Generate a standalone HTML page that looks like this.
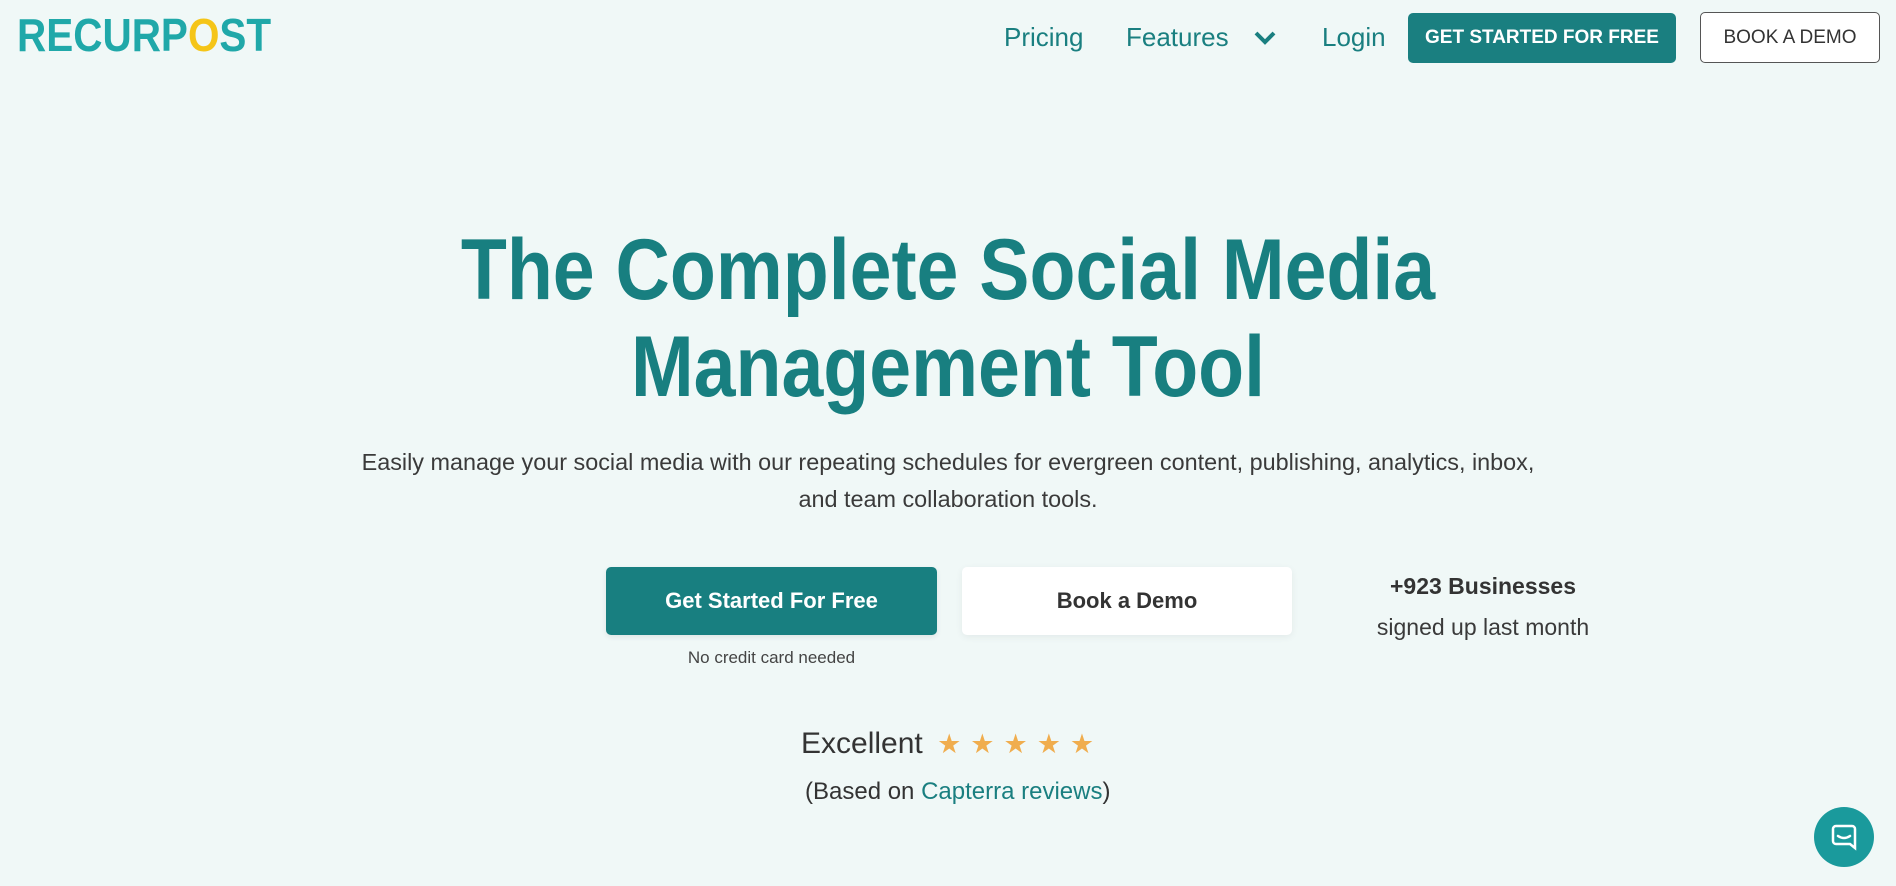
<!DOCTYPE html>
<html><head><meta charset="utf-8"><style>
*{margin:0;padding:0;box-sizing:border-box}
body{width:1896px;height:886px;background:#f0f8f7;font-family:"Liberation Sans",sans-serif;position:relative;overflow:hidden;color:#333}
.a{position:absolute;white-space:nowrap}
.nav{font-size:26px;color:#1a7f80;top:22px}
.btn{position:absolute;display:flex;align-items:center;justify-content:center;border-radius:5px}
h1{position:absolute;left:0;width:1896px;text-align:center;top:222px;font-size:86px;line-height:97px;color:#187f80;font-weight:bold;transform:scaleX(0.875);transform-origin:center}
.c{left:0;width:1896px;text-align:center}
</style></head><body>
<div class="a" style="left:17px;top:8px;font-size:46px;font-weight:bold;color:#20a8a9;transform:scaleX(0.88);transform-origin:left">RECURP<span style="color:#f5c518">O</span>ST</div>
<div class="a nav" style="left:1004px">Pricing</div>
<div class="a nav" style="left:1126px">Features</div>
<svg class="a" style="left:1253px;top:30px" width="24" height="16" viewBox="0 0 24 16"><path d="M3 3l9 9 9-9" fill="none" stroke="#1a7f80" stroke-width="4"/></svg>
<div class="a nav" style="left:1322px">Login</div>
<div class="btn" style="left:1408px;top:13px;width:268px;height:50px;background:#1a7f80;color:#fff;font-size:19px;font-weight:bold">GET STARTED FOR FREE</div>
<div class="btn" style="left:1700px;top:12px;width:180px;height:51px;background:#fff;border:1px solid #555;color:#333;font-size:19px">BOOK A DEMO</div>
<h1>The Complete Social Media<br>Management Tool</h1>
<div class="a c" style="top:444px;font-size:23.4px;line-height:37px;color:#3a3a3a">Easily manage your social media with our repeating schedules for evergreen content, publishing, analytics, inbox,<br>and team collaboration tools.</div>
<div class="btn" style="left:606px;top:567px;width:331px;height:68px;background:#187f80;color:#fff;font-size:22px;font-weight:bold;box-shadow:0 2px 6px rgba(0,0,0,.08)">Get Started For Free</div>
<div class="btn" style="left:962px;top:567px;width:330px;height:68px;background:#fff;color:#333;font-size:22px;font-weight:bold;box-shadow:0 2px 8px rgba(0,0,0,.06)">Book a Demo</div>
<div class="a" style="left:606px;width:331px;text-align:center;top:648px;font-size:17px;color:#444">No credit card needed</div>
<div class="a" style="left:1333px;width:300px;text-align:center;top:573px;font-size:23px;font-weight:bold;color:#333">+923 Businesses</div>
<div class="a" style="left:1333px;width:300px;text-align:center;top:614px;font-size:23px;color:#3a3a3a">signed up last month</div>
<div class="a" style="left:801px;top:727px;font-size:30px;color:#333">Excellent <span style="color:#f0ad4e;font-size:27px;letter-spacing:9px;margin-left:6px">★★★★★</span></div>
<div class="a" style="left:805px;top:778px;font-size:24px;color:#333">(Based on <span style="color:#1a7f80">Capterra reviews</span>)</div>
<div class="a" style="left:1814px;top:807px;width:60px;height:60px;border-radius:50%;background:#1a9a9c;display:flex;align-items:center;justify-content:center">
<svg width="28" height="28" viewBox="0 0 28 28"><path d="M6 3h16a3 3 0 0 1 3 3v19l-5-4H6a3 3 0 0 1-3-3V6a3 3 0 0 1 3-3z" fill="none" stroke="#fff" stroke-width="2.5"/><path d="M8 13q6 4 12 0" fill="none" stroke="#fff" stroke-width="2.5" stroke-linecap="round"/></svg></div>
</body></html>
